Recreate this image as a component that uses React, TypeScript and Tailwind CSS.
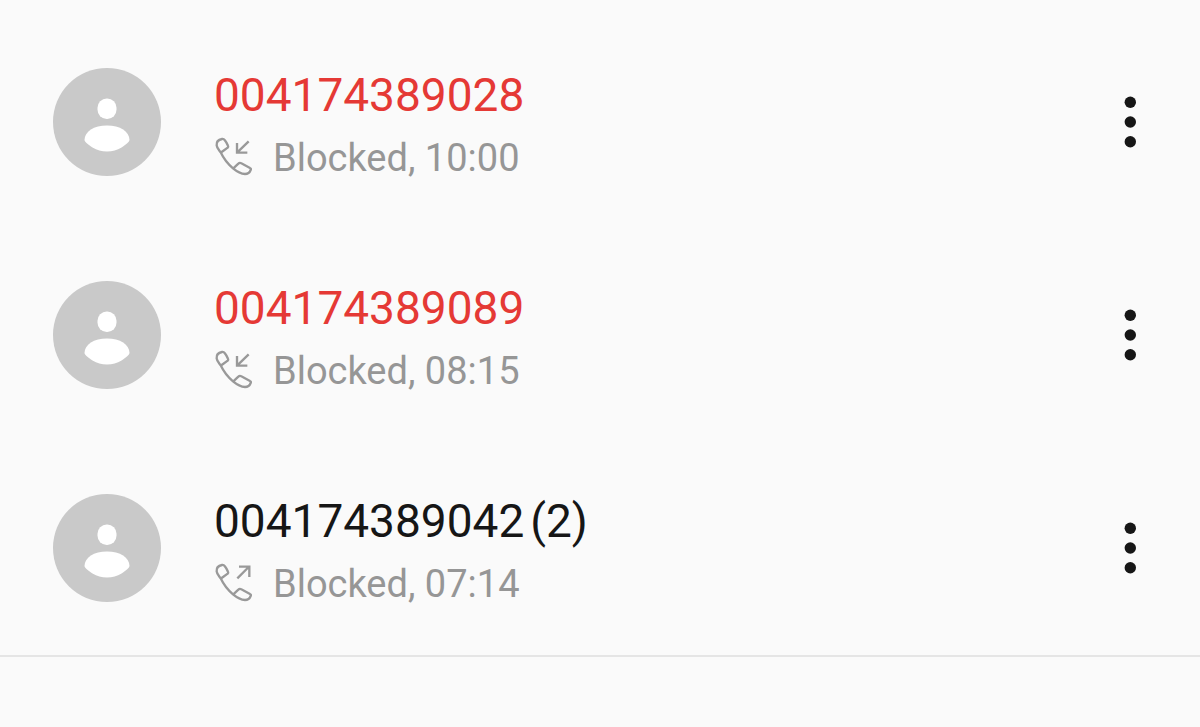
/**
 * Call log list with blocked calls
 */

import React from 'react';

type Direction = 'incoming' | 'outgoing';

interface CallEntry {
  id: number;
  number: string;
  count?: number;
  direction: Direction;
  status: string;
  time: string;
  rejected: boolean;
}

const calls: CallEntry[] = [
  { id: 1, number: '004174389028', direction: 'incoming', status: 'Blocked', time: '10:00', rejected: true },
  { id: 2, number: '004174389089', direction: 'incoming', status: 'Blocked', time: '08:15', rejected: true },
  { id: 3, number: '004174389042', count: 2, direction: 'outgoing', status: 'Blocked', time: '07:14', rejected: false },
];

const Avatar = () => (
  <svg viewBox="0 0 108 108" className="w-[108px] h-[108px] shrink-0" aria-hidden="true">
    <circle cx="54" cy="54" r="54" fill="#c9c9c9" />
    <rect x="44.5" y="30.5" width="19" height="20.5" rx="9.2" fill="#fff" />
    <path
      d="M54 57.5c13 0 22.5 6 22.5 14.5 0 2-5 5.5-8 7.5-4.5 2.8-9 4-14.5 4s-10-1.2-14.5-4c-3-2-8-5.5-8-7.5C31.5 63.5 41 57.5 54 57.5z"
      fill="#fff"
    />
  </svg>
);

const CallIcon = ({ direction }: { direction: Direction }) => (
  <svg
    viewBox="0 0 120 120"
    className="w-10 h-10 mb-1 shrink-0"
    fill="none"
    stroke="#999999"
    strokeWidth="7"
    strokeLinecap="round"
    strokeLinejoin="round"
    role="img"
    aria-label={`${direction} call`}
  >
    <path d="M23 48L41 35Q44 33 42 29C39 22 36 17 32 12Q29 8 24 9C13 11 7 18 8 28C9 37 15 42 20 49C29 68 40 83 57 97C68 106 80 113 93 114C101 114 107 110 110 102Q112 98 108 96L82 82Q77 79 73 83L58 97" />
    {direction === 'incoming' ? (
      <path d="M104 16L70 49M69 21V50H100" strokeLinecap="butt" strokeLinejoin="miter" />
    ) : (
      <path d="M70 49L104 15M75 14H106V45" strokeLinecap="butt" strokeLinejoin="miter" />
    )}
  </svg>
);

const MoreIcon = () => (
  <svg viewBox="0 0 12 52" className="w-3 h-[52px]" fill="#161616" aria-hidden="true">
    <circle cx="6.3" cy="6.3" r="5.7" />
    <circle cx="6.3" cy="26" r="5.7" />
    <circle cx="6.3" cy="45.7" r="5.7" />
  </svg>
);

const CallRow = ({ call }: { call: CallEntry }) => (
  <li className="flex items-center h-[213px] pl-[53px] pr-12">
    <Avatar />
    <div className="flex-1 min-w-0 ml-[53px] pt-2.5">
      <p
        className={`flex gap-1.5 text-[46px] leading-[63px] whitespace-nowrap ${
          call.rejected ? 'text-[#e53935]' : 'text-[#161616]'
        }`}
      >
        <span>{call.number}</span>
        {call.count && <span>({call.count})</span>}
      </p>
      <div className="flex items-center text-[38px] leading-[63px] text-[#969696] whitespace-nowrap">
        <CallIcon direction={call.direction} />
        <span className="ml-[19px]">
          {call.status}, {call.time}
        </span>
      </div>
    </div>
    <button type="button" aria-label={`More options for ${call.number}`} className="px-4 py-3 shrink-0">
      <MoreIcon />
    </button>
  </li>
);

export default function App() {
  return (
    <main className="min-h-screen bg-[#fafafa] pt-[15px] font-['Roboto',sans-serif]">
      <ul className="pb-px border-b-2 border-[#e5e5e5]">
        {calls.map((call) => (
          <CallRow key={call.id} call={call} />
        ))}
      </ul>
    </main>
  );
}
